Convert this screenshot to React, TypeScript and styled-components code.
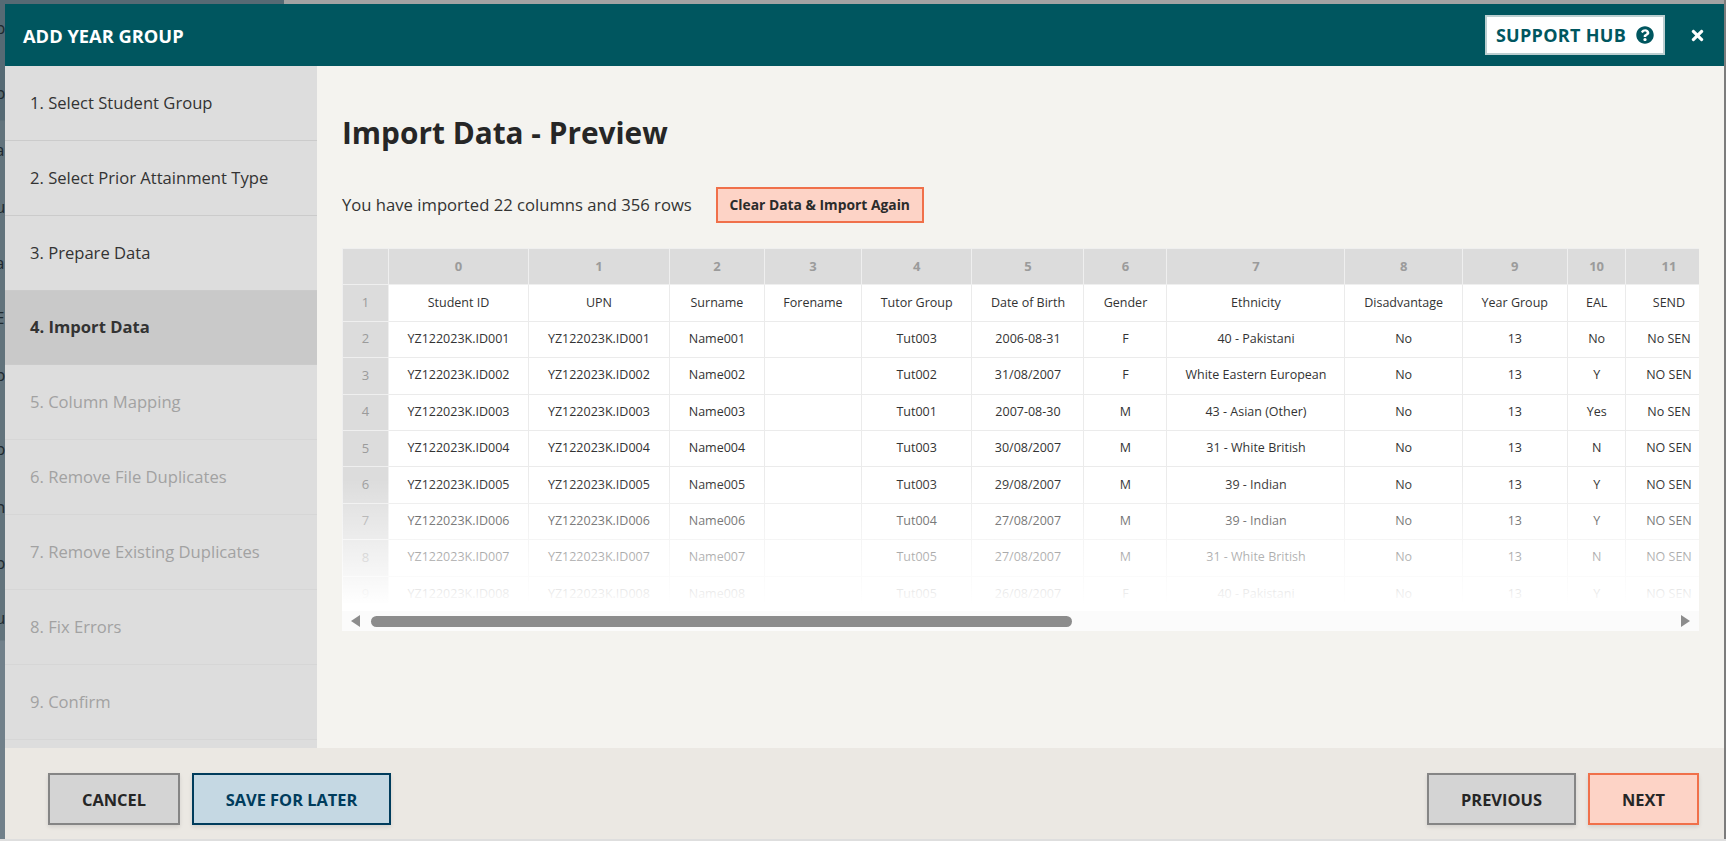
import styled, { createGlobalStyle } from 'styled-components';
import { FaQuestionCircle, FaTimes } from 'react-icons/fa';

type Step = {
  label: string;
  state: 'done' | 'active' | 'todo';
};

const steps: Step[] = [
  { label: '1. Select Student Group', state: 'done' },
  { label: '2. Select Prior Attainment Type', state: 'done' },
  { label: '3. Prepare Data', state: 'done' },
  { label: '4. Import Data', state: 'active' },
  { label: '5. Column Mapping', state: 'todo' },
  { label: '6. Remove File Duplicates', state: 'todo' },
  { label: '7. Remove Existing Duplicates', state: 'todo' },
  { label: '8. Fix Errors', state: 'todo' },
  { label: '9. Confirm', state: 'todo' },
];

const colWidths = [46, 140, 140.8, 95.3, 96.8, 110.6, 112, 83, 178, 117.3, 105, 58.7, 86];

const headings = ['Student ID', 'UPN', 'Surname', 'Forename', 'Tutor Group', 'Date of Birth', 'Gender', 'Ethnicity', 'Disadvantage', 'Year Group', 'EAL', 'SEND'];

const rows = [
  ['YZ122023K.ID001', 'YZ122023K.ID001', 'Name001', '', 'Tut003', '2006-08-31', 'F', '40 - Pakistani', 'No', '13', 'No', 'No SEN'],
  ['YZ122023K.ID002', 'YZ122023K.ID002', 'Name002', '', 'Tut002', '31/08/2007', 'F', 'White Eastern European', 'No', '13', 'Y', 'NO SEN'],
  ['YZ122023K.ID003', 'YZ122023K.ID003', 'Name003', '', 'Tut001', '2007-08-30', 'M', '43 - Asian (Other)', 'No', '13', 'Yes', 'No SEN'],
  ['YZ122023K.ID004', 'YZ122023K.ID004', 'Name004', '', 'Tut003', '30/08/2007', 'M', '31 - White British', 'No', '13', 'N', 'NO SEN'],
  ['YZ122023K.ID005', 'YZ122023K.ID005', 'Name005', '', 'Tut003', '29/08/2007', 'M', '39 - Indian', 'No', '13', 'Y', 'NO SEN'],
  ['YZ122023K.ID006', 'YZ122023K.ID006', 'Name006', '', 'Tut004', '27/08/2007', 'M', '39 - Indian', 'No', '13', 'Y', 'NO SEN'],
  ['YZ122023K.ID007', 'YZ122023K.ID007', 'Name007', '', 'Tut005', '27/08/2007', 'M', '31 - White British', 'No', '13', 'N', 'NO SEN'],
  ['YZ122023K.ID008', 'YZ122023K.ID008', 'Name008', '', 'Tut005', '26/08/2007', 'F', '40 - Pakistani', 'No', '13', 'Y', 'NO SEN'],
];

// letters of the page behind the dialog, only their right edge shows
const behindLetters = [
  { ch: 'p', h: 65 },
  { ch: 'p', h: 57 },
  { ch: 'a', h: 57 },
  { ch: 'u', h: 56 },
  { ch: 'a', h: 55 },
  { ch: 'E', h: 57 },
  { ch: 'p', h: 74 },
  { ch: 'p', h: 58 },
  { ch: 'n', h: 56 },
  { ch: 'p', h: 55 },
  { ch: 'u', h: 24 },
];

export default function App() {
  return (
    <>
      <GlobalBodyStyle />
      <Page>
        <BehindSide>
          {behindLetters.map((item, idx) => (
            <BehindLetter key={idx} $h={item.h}>
              {item.ch}
            </BehindLetter>
          ))}
        </BehindSide>
        <BehindMain />
      </Page>

      <Dialog>
        <Header>
          <DialogTitle>ADD YEAR GROUP</DialogTitle>
          <HeaderActions>
            <SupportButton>
              SUPPORT HUB
              <FaQuestionCircle size={18} />
            </SupportButton>
            <CloseButton aria-label='Close'>
              <FaTimes size={17} />
            </CloseButton>
          </HeaderActions>
        </Header>

        <Body>
          <Sidebar>
            {steps.map((step) => (
              <StepItem key={step.label} $state={step.state}>
                {step.label}
              </StepItem>
            ))}
          </Sidebar>

          <Content>
            <PageTitle>Import Data - Preview</PageTitle>

            <SummaryRow>
              <SummaryText>You have imported 22 columns and 356 rows</SummaryText>
              <ClearButton>Clear Data &amp; Import Again</ClearButton>
            </SummaryRow>

            <TableFrame>
              <TableClip>
                <SheetTable>
                  <colgroup>
                    {colWidths.map((w, idx) => (
                      <col key={idx} style={{ width: w }} />
                    ))}
                  </colgroup>
                  <tbody>
                    <tr>
                      <ColHead />
                      {headings.map((_, idx) => (
                        <ColHead key={idx}>{idx}</ColHead>
                      ))}
                    </tr>
                    <tr>
                      <RowHead>1</RowHead>
                      {headings.map((text) => (
                        <Cell key={text}>{text}</Cell>
                      ))}
                    </tr>
                    {rows.map((row, rowIdx) => (
                      <tr key={rowIdx}>
                        <RowHead>{rowIdx + 2}</RowHead>
                        {row.map((text, idx) => (
                          <Cell key={idx}>{text}</Cell>
                        ))}
                      </tr>
                    ))}
                  </tbody>
                </SheetTable>
                <BottomFade />
              </TableClip>

              <ScrollBar>
                <ArrowLeft />
                <ScrollTrack>
                  <ScrollThumb />
                </ScrollTrack>
                <ArrowRight />
              </ScrollBar>
            </TableFrame>
          </Content>
        </Body>

        <Footer>
          <ButtonGroup>
            <FooterButton $kind='grey' $w={132}>CANCEL</FooterButton>
            <FooterButton $kind='blue' $w={199}>SAVE FOR LATER</FooterButton>
          </ButtonGroup>
          <ButtonGroup>
            <FooterButton $kind='grey' $w={149}>PREVIOUS</FooterButton>
            <FooterButton $kind='coral' $w={111}>NEXT</FooterButton>
          </ButtonGroup>
        </Footer>
      </Dialog>
    </>
  );
}

/** Styles */

const GlobalBodyStyle = createGlobalStyle`
  html, body {
    margin: 0;
    padding: 0;
    height: 100%;
    overflow: hidden;
    background-color: #dedede;
    font-family: 'Open Sans', 'Liberation Sans', sans-serif;
  }
  * {
    box-sizing: border-box;
  }
`;

// --- page behind the dialog ---
const Page = styled.div`
  display: flex;
  height: 839px;
  background-color: #a3a3a3;
`;

const BehindSide = styled.div`
  width: 284px;
  padding-top: 17px;
  background: linear-gradient(#566a74 0, #566a74 120px, #62737c 121px, #62737c 640px, #71808a 641px);
  overflow: hidden;
`;

const BehindMain = styled.div`
  flex: 1;
  border-right: 2px solid #7c7c7c;
`;

const BehindLetter = styled.div<{ $h: number }>`
  height: ${(p) => p.$h}px;
  font-size: 17px;
  line-height: 22px;
  margin-left: -5px;
  color: #1f2a30;
`;

// --- dialog ---
const Dialog = styled.div`
  position: fixed;
  top: 4px;
  left: 5px;
  right: 2px;
  bottom: 2px;
  display: flex;
  flex-direction: column;
  background-color: #f4f3ef;
`;

const Header = styled.header`
  flex: 0 0 62px;
  display: flex;
  align-items: center;
  justify-content: space-between;
  padding: 0 18px 0 18px;
  background-color: #00565f;
`;

const DialogTitle = styled.h2`
  margin: 0;
  font-size: 18.3px;
  font-weight: 700;
  color: #fff;
`;

const HeaderActions = styled.div`
  display: flex;
  align-items: center;
  gap: 24px;
`;

const SupportButton = styled.button`
  width: 180px;
  height: 40px;
  display: flex;
  align-items: center;
  justify-content: center;
  gap: 10px;
  background-color: #fff;
  border: 2px solid #bccfd1;
  color: #00565f;
  font-family: inherit;
  font-size: 18px;
  font-weight: 700;
  letter-spacing: 0.3px;
`;

const CloseButton = styled.button`
  display: flex;
  padding: 0;
  background: none;
  border: none;
  color: #fff;
`;

const Body = styled.div`
  flex: 1;
  display: flex;
  min-height: 0;
`;

const Sidebar = styled.nav`
  flex: 0 0 312px;
  background-color: #dddddd;
`;

const StepItem = styled.div<{ $state: Step['state'] }>`
  height: 74.85px;
  display: flex;
  align-items: center;
  padding: 0 0 1px 25px;
  font-size: 16.6px;
  font-weight: ${(p) => (p.$state === 'active' ? 700 : 400)};
  color: ${(p) => (p.$state === 'todo' ? '#a2a2a2' : '#333')};
  background-color: ${(p) => (p.$state === 'active' ? '#c9c9c9' : 'transparent')};
  border-bottom: 1px solid ${(p) => (p.$state === 'todo' ? '#d6d6d6' : '#cbcbcb')};
`;

const Content = styled.main`
  flex: 1;
  min-width: 0;
  padding: 44px 25px 0 25px;
`;

const PageTitle = styled.h1`
  margin: 0 0 31px;
  font-size: 29.8px;
  line-height: 46px;
  font-weight: 700;
  color: #262626;
`;

const SummaryRow = styled.div`
  display: flex;
  align-items: center;
  gap: 24px;
  margin-bottom: 25px;
`;

const SummaryText = styled.span`
  margin-top: -2px;
  font-size: 16.65px;
  color: #333;
`;

const ClearButton = styled.button`
  width: 208px;
  height: 36px;
  padding: 0 0 2px;
  background-color: #fdd3c6;
  border: 2px solid #f0704a;
  font-family: inherit;
  font-size: 13.85px;
  font-weight: 700;
  color: #2b2b2b;
`;

const TableFrame = styled.div`
  display: flex;
  flex-direction: column;
`;

const TableClip = styled.div`
  position: relative;
  height: 363px;
  overflow: hidden;
  background-color: #fff;
`;

const SheetTable = styled.table`
  table-layout: fixed;
  width: 1370.1px;
  border-collapse: collapse;
`;

const ColHead = styled.td`
  height: 36.4px;
  padding: 0 0 2px;
  text-align: center;
  font-size: 13px;
  font-weight: 700;
  color: #9b9b9b;
  background-color: #dcdcdc;
  border: 1px solid #efefef;
`;

const RowHead = styled.td`
  height: 36.4px;
  padding: 0 0 2px;
  text-align: center;
  font-size: 13px;
  color: #9b9b9b;
  background-color: #dcdcdc;
  border: 1px solid #efefef;
`;

const Cell = styled.td`
  height: 36.4px;
  padding: 0 0 2px;
  text-align: center;
  font-size: 12.5px;
  color: #333;
  background-color: #fff;
  border: 1px solid #ebebeb;
  white-space: nowrap;
`;

const BottomFade = styled.div`
  position: absolute;
  left: 0;
  right: 0;
  bottom: 0;
  height: 132px;
  background: linear-gradient(rgba(255, 255, 255, 0), #fff 95%);
`;

const ScrollBar = styled.div`
  height: 20px;
  display: flex;
  align-items: center;
  padding: 0 9px;
  gap: 11px;
  background-color: #fbfbfb;
`;

const ArrowLeft = styled.span`
  width: 0;
  height: 0;
  border-style: solid;
  border-width: 6px 9px 6px 0;
  border-color: transparent #8c8c8c transparent transparent;
`;

const ArrowRight = styled.span`
  width: 0;
  height: 0;
  border-style: solid;
  border-width: 6px 0 6px 9px;
  border-color: transparent transparent transparent #8c8c8c;
`;

const ScrollTrack = styled.div`
  flex: 1;
`;

const ScrollThumb = styled.div`
  width: 701px;
  height: 11px;
  border-radius: 6px;
  background-color: #8c8c8c;
`;

const Footer = styled.footer`
  flex: 0 0 91px;
  display: flex;
  align-items: center;
  justify-content: space-between;
  padding: 11px 25px 0 43px;
  background-color: #ebe8e3;
`;

const ButtonGroup = styled.div`
  display: flex;
  gap: 12px;
`;

const buttonTones = {
  grey: { bg: '#d4d4d4', line: '#858585', text: '#262626' },
  blue: { bg: '#c5d8e3', line: '#003c5c', text: '#003c5c' },
  coral: { bg: '#fdd3c6', line: '#f0704a', text: '#262626' },
};

const FooterButton = styled.button<{ $kind: keyof typeof buttonTones; $w: number }>`
  width: ${(p) => p.$w}px;
  height: 52px;
  background-color: ${(p) => buttonTones[p.$kind].bg};
  border: 2.5px solid ${(p) => buttonTones[p.$kind].line};
  color: ${(p) => buttonTones[p.$kind].text};
  font-family: inherit;
  font-size: 16.4px;
  font-weight: 700;
  box-shadow: 0 2px 4px rgba(0, 0, 0, 0.1);
`;
